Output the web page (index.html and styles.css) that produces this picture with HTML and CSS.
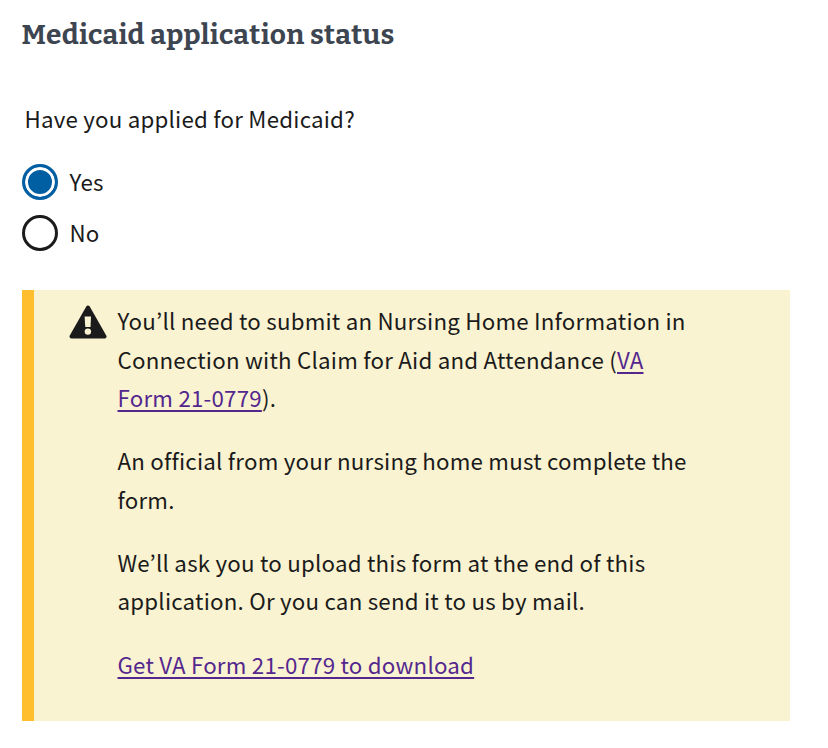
FILE: index.html
```html
<!DOCTYPE html>
<html lang="en">
<head>
<meta charset="utf-8">
<title>Medicaid application status</title>
<link rel="stylesheet" href="styles.css">
</head>
<body>
<main>
<h1>Medicaid application status</h1>
<p class="question">Have you applied for Medicaid?</p>
<div class="option"><span class="radio checked"></span><span class="label">Yes</span></div>
<div class="option"><span class="radio"></span><span class="label">No</span></div>
<section class="alert">
<svg class="icon" viewBox="0 0 38 34" width="38" height="34"><path d="M19 2.5 35.5 31.5H2.5Z" fill="#1b1b1b" stroke="#1b1b1b" stroke-width="4" stroke-linejoin="round"/><path d="M15.6 11.5h6.4l-.5 10.5h-5.2z" fill="#faf3d1"/><circle cx="18.9" cy="26.6" r="3.2" fill="#faf3d1"/></svg>
<div class="copy">
<p>You’ll need to submit an Nursing Home Information in<br>Connection with Claim for Aid and Attendance (<a>VA</a><br><a>Form 21-0779</a>).</p>
<p>An official from your nursing home must complete the<br>form.</p>
<p>We’ll ask you to upload this form at the end of this<br>application. Or you can send it to us by mail.</p>
<p><a>Get VA Form 21-0779 to download</a></p>
</div>
</section>
</main>
</body>
</html>
```
FILE: styles.css
```css
* { box-sizing: border-box; }
body { margin: 0; background: #fff; color: #1b1b1b; font: 22.3px/38.4px "Source Sans Pro", "Noto Sans CJK JP", "Noto Sans", sans-serif; letter-spacing: 0.22px; }
main { padding: 15px 38px 0 22px; }
h1 { margin: 0 0 0 -0.5px; font: bold 28px/40px Bitter, "Noto Serif", "DejaVu Serif", serif; letter-spacing: 0.3px; color: #3d4551; white-space: nowrap; }
p { margin: 0; white-space: nowrap; }
.question { margin: 44px 0 27px 2.5px; }
.option { display: flex; align-items: center; gap: 12px; height: 36px; margin-bottom: 15px; }
.label { margin: 0 0 2px -0.5px; }
.radio { width: 36px; height: 36px; border: 3px solid #1b1b1b; border-radius: 50%; }
.radio.checked { border-color: #005ea2; background: #005ea2; box-shadow: inset 0 0 0 3px #fff; }
.alert { display: flex; margin-top: 39px; height: 431px; padding: 11px 0 0 35px; background: #faf3d1; border-left: 12px solid #ffbe2e; }
.icon { flex: none; margin: 4px 10.5px 0 0; }
.copy { display: flex; flex-direction: column; gap: 24.8px; }
a { color: #54278f; text-decoration: underline; text-underline-offset: 3px; text-decoration-thickness: 2px; text-decoration-skip-ink: none; }
```
